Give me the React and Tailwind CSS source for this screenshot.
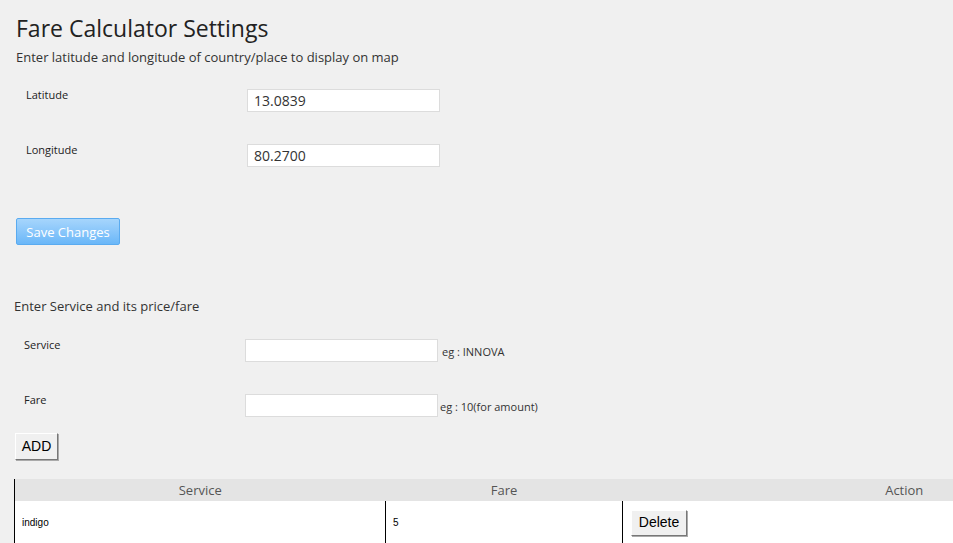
import { useState } from 'react';

const sans = { fontFamily: '"Open Sans", "Noto Sans", sans-serif' };
const arial = { fontFamily: '"Liberation Sans", Arial, sans-serif' };

export default function App() {
  const [lat, setLat] = useState('13.0839');
  const [lng, setLng] = useState('80.2700');
  const [service, setService] = useState('');
  const [fare, setFare] = useState('');
  const [rows, setRows] = useState([{ id: 1, service: 'indigo', fare: '5' }]);

  const addRow = () => {
    if (!service || !fare) return;
    setRows([...rows, { id: Date.now(), service, fare }]);
    setService('');
    setFare('');
  };

  return (
    <div
      className="w-full h-[543px] overflow-hidden bg-[#f0f0f0] text-[#333]"
      style={sans}
    >
      {/* LOCATION */}
      <div className="pl-[16px] pt-[12px]">
        <h1 className="text-[23px] leading-[32px] text-[#222] font-normal">
          Fare Calculator Settings
        </h1>
        <p className="mt-[4px] text-[13px] leading-[18px] text-[#333]">
          Enter latitude and longitude of country/place to display on map
        </p>

        <div className="mt-[23px] flex items-start">
          <label className="w-[231px] pl-[10px] text-[11px] leading-[12px] text-[#222]">
            Latitude
          </label>
          <input
            className="w-[193px] h-[23px] bg-white border border-[#dcdcdc] px-[6px] text-[14px] text-[#333] outline-none"
            value={lat}
            onChange={(e) => setLat(e.target.value)}
          />
        </div>

        <div className="mt-[32px] flex items-start">
          <label className="w-[231px] pl-[10px] text-[11px] leading-[12px] text-[#222]">
            Longitude
          </label>
          <input
            className="w-[193px] h-[23px] bg-white border border-[#dcdcdc] px-[6px] text-[14px] text-[#333] outline-none"
            value={lng}
            onChange={(e) => setLng(e.target.value)}
          />
        </div>

        <button className="mt-[51px] w-[104px] h-[27px] pt-[2px] rounded-[2px] border border-[#5aabf0] bg-gradient-to-b from-[#a6d5fc] to-[#6ab7f8] text-white text-[13px]">
          Save Changes
        </button>
      </div>

      {/* SERVICES */}
      <div className="pl-[14px] mt-[52px]">
        <p className="text-[13px] leading-[18px] text-[#333]">
          Enter Service and its price/fare
        </p>

        <div className="mt-[24px] flex items-start">
          <label className="w-[231px] pl-[10px] text-[11px] leading-[12px] text-[#222]">
            Service
          </label>
          <input
            className="w-[193px] h-[23px] bg-white border border-[#dcdcdc] px-[6px] text-[14px] outline-none"
            value={service}
            onChange={(e) => setService(e.target.value)}
          />
          <span className="ml-[4px] mt-[5px] text-[11px] text-[#333]">eg : INNOVA</span>
        </div>

        <div className="mt-[32px] flex items-start">
          <label className="w-[231px] pl-[10px] text-[11px] leading-[12px] text-[#222]">
            Fare
          </label>
          <input
            className="w-[193px] h-[23px] bg-white border border-[#dcdcdc] px-[6px] text-[14px] outline-none"
            value={fare}
            onChange={(e) => setFare(e.target.value)}
          />
          <span className="ml-[2px] mt-[5px] text-[11px] text-[#333]">eg : 10(for amount)</span>
        </div>

        <button
          onClick={addRow}
          className="mt-[16px] ml-[1px] w-[43px] h-[27px] bg-[#f0f0f0] border border-t-white border-l-white border-r-[#777] border-b-[#777] shadow-[1px_1px_0_#aaa] text-[14px] text-black"
          style={arial}
        >
          ADD
        </button>

        {/* TABLE */}
        <table className="mt-[19px] w-[1172px] border-collapse border-l border-l-black">
          <thead>
            <tr className="bg-[#e4e4e4] h-[21px]">
              <th className="w-[371px] pt-[2px] font-normal text-[13px] text-[#555] text-center">Service</th>
              <th className="w-[237px] pt-[2px] font-normal text-[13px] text-[#555] text-center">Fare</th>
              <th className="pt-[2px] font-normal text-[13px] text-[#555] text-center">Action</th>
            </tr>
          </thead>
          <tbody>
            {rows.map((r) => (
              <tr key={r.id} className="bg-white h-[44px]">
                <td className="pl-[7px] text-[10px] text-black border-r border-r-black" style={arial}>
                  {r.service}
                </td>
                <td className="pl-[7px] text-[10px] text-black border-r border-r-black" style={arial}>
                  {r.fare}
                </td>
                <td className="pl-[8px]">
                  <button
                    onClick={() => setRows(rows.filter((x) => x.id !== r.id))}
                    className="w-[56px] h-[26px] bg-[#f0f0f0] border border-t-white border-l-white border-r-[#777] border-b-[#777] shadow-[1px_1px_0_#aaa] text-[14px] text-black"
                    style={arial}
                  >
                    Delete
                  </button>
                </td>
              </tr>
            ))}
          </tbody>
        </table>
      </div>
    </div>
  );
}
